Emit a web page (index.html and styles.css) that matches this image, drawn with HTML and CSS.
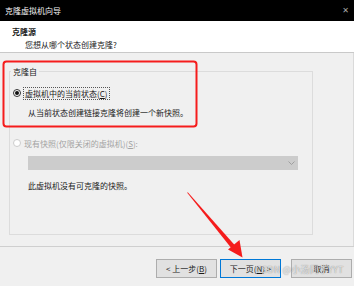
FILE: index.html
```html
<!DOCTYPE html>
<html lang="zh-CN">
<head>
<meta charset="utf-8">
<link rel="stylesheet" href="styles.css">
</head>
<body>
<div class="dialog">
  <div class="titlebar">
    <span class="title">克隆虚拟机向导</span>
    <span class="close">✕</span>
  </div>
  <div class="header">
    <div class="h-title">克隆源</div>
    <div class="h-sub">您想从哪个状态创建克隆?</div>
  </div>
  <div class="main">
    <fieldset class="group">
      <legend>克隆自</legend>
      <div class="row row1">
        <span class="radio checked"></span>
        <span class="focus">虚拟机中的当前状态(<u>C</u>)</span>
      </div>
      <div class="desc">从当前状态创建链接克隆将创建一个新快照。</div>
      <div class="row row2 disabled">
        <span class="radio"></span>
        <span class="lbl">现有快照(仅限关闭的虚拟机)(<u>S</u>):</span>
      </div>
      <div class="combo">
        <svg class="chev" width="7" height="4" viewBox="0 0 7 4"><path d="M0.5 0.5 L3.5 3.5 L6.5 0.5" fill="none" stroke="#9a9a9a" stroke-width="0.9"/></svg>
      </div>
      <div class="note">此虚拟机没有可克隆的快照。</div>
    </fieldset>
  </div>
  <div class="footer">
    <button class="btn">&lt; 上一步(<u>B</u>)</button>
    <button class="btn default">下一页(<u>N</u>) &gt;</button>
    <button class="btn cancel">取消</button>
  </div>
</div>
<div class="watermark">CSDN @小汤同学YYT</div>
<svg class="annot" width="354" height="286" viewBox="0 0 354 286">
  <rect x="3.5" y="61.5" width="193" height="65" rx="3" ry="3" fill="none" stroke="#f51c1c" stroke-width="2"/>
  <polygon points="187,192.5 188,192.5 235.5,246 232,249" fill="#f51c1c"/>
  <polygon points="242.5,257.5 228,249.5 239.5,240" fill="#f51c1c"/>
</svg>
</body>
</html>
```
FILE: styles.css
```css
html, body {
  margin: 0;
  padding: 0;
}
body {
  width: 354px;
  height: 286px;
  overflow: hidden;
  position: relative;
  background: #f0f0f0;
  font-family: "Noto Sans CJK SC", "Microsoft YaHei", sans-serif;
  font-size: 8px;
  line-height: 11px;
  color: #1a1a1a;
}
.dialog {
  display: flex;
  flex-direction: column;
  width: 354px;
  height: 286px;
}
.titlebar {
  height: 21px;
  background: #000;
  color: #f4f4f4;
  display: flex;
  align-items: center;
  justify-content: space-between;
  padding: 0 5px 0 5px;
  box-sizing: border-box;
}
.close {
  color: #a8a8a8;
  font-size: 8px;
  font-family: "DejaVu Sans", sans-serif;
}
.header {
  height: 32px;
  background: #fff;
  border-bottom: 1px solid #c9c9c9;
  padding: 5px 0 0 12px;
  box-sizing: border-box;
}
.h-title {
  font-weight: bold;
}
.h-sub {
  margin-top: 2px;
  padding-left: 13px;
}
.main {
  height: 193px;
  box-sizing: border-box;
  padding: 13px 0 0 9px;
  border-right: 1px solid #dadada;
}
.group {
  margin: 0;
  width: 304px;
  height: 169px;
  box-sizing: border-box;
  border: 1px solid #dcdcdc;
  padding: 0 0 0 1px;
}
.group legend {
  padding: 0 2px;
  color: #1a1a1a;
}
.row {
  display: flex;
  align-items: center;
  height: 12px;
}
.row1 {
  margin-top: 10px;
}
.radio {
  width: 8px;
  height: 8px;
  box-sizing: border-box;
  border: 1px solid #333;
  border-radius: 50%;
  background: #fff;
  margin: 0 3px 0 2px;
  position: relative;
}
.radio.checked::after {
  content: "";
  position: absolute;
  left: 1px;
  top: 1px;
  width: 4px;
  height: 4px;
  border-radius: 50%;
  background: #111;
}
.focus {
  outline: 1px dotted #555;
  outline-offset: 0;
  padding: 0 1px;
}
.desc {
  margin-top: 8px;
  padding-left: 17px;
}
.row2 {
  margin-top: 19px;
}
.disabled {
  color: #a3a3a3;
}
.disabled .radio {
  border-color: #cccccc;
}
.combo {
  margin: 7px 0 0 17px;
  width: 270px;
  height: 14px;
  background: #cccccc;
  box-sizing: border-box;
  display: flex;
  align-items: center;
  justify-content: flex-end;
  padding-right: 3px;
}
.note {
  margin-top: 10px;
  padding-left: 17px;
}
.footer {
  flex: 1;
  border-top: 1px solid #cfcfcf;
  display: flex;
  justify-content: flex-end;
  align-items: flex-start;
  padding: 12px 2px 0 0;
}
.btn {
  width: 61px;
  height: 19px;
  margin: 0;
  padding: 0;
  background: #e1e1e1;
  border: 1px solid #adadad;
  font-family: inherit;
  font-size: 8px;
  color: #1a1a1a;
  line-height: 11px;
}
.btn.default {
  border-color: #0078d7;
  margin-left: 3px;
}
.btn.cancel {
  margin-left: 10px;
}
.watermark {
  position: absolute;
  left: 256px;
  top: 264px;
  font-family: "Noto Sans CJK SC", sans-serif;
  font-size: 9px;
  line-height: 12px;
  color: rgba(255, 255, 255, 0.75);
  text-shadow: 0 0 1px rgba(0, 0, 0, 0.55);
  letter-spacing: 0.2px;
}
.annot {
  position: absolute;
  left: 0;
  top: 0;
  pointer-events: none;
}
```
